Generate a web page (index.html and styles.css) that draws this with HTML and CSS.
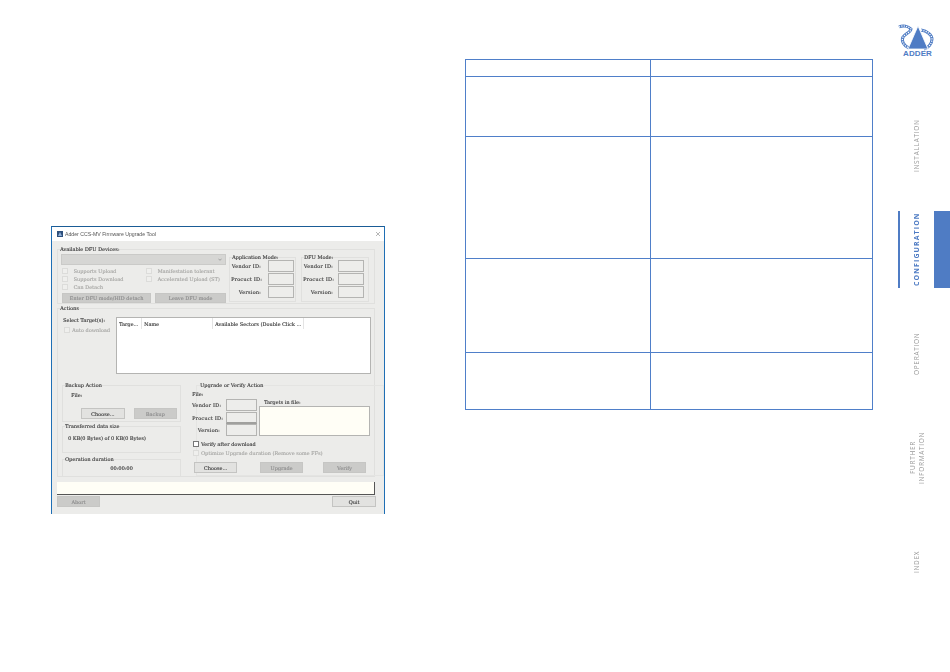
FILE: index.html
```html
<!DOCTYPE html>
<html>
<head>
    <title>Adder CCS-MV Configuration</title>
    <link rel="stylesheet" href="styles.css">
</head>
<body>
    <div class="page">
        <div class="left">
            <div class="window">
                <div class="titlebar">
                    <svg class="app-icon" viewBox="0 0 6 6"><rect width="6" height="6" fill="#2d4f7c"/><path d="M3 1 L5 5 H1 Z" fill="#8fb0d8"/></svg>
                    <span class="title">Adder CCS-MV Firmware Upgrade Tool</span>
                    <svg class="close" viewBox="0 0 5 5"><path d="M0 0 L5 5 M5 0 L0 5" stroke="#666" stroke-width=".6"/></svg>
                </div>
                <div class="dialog">
                    <fieldset class="group devices">
                        <legend>Available DFU Devices:</legend>
                        <div class="devices-row">
                            <div class="devices-left">
                                <div class="combo">
                                    <svg class="chevron" viewBox="0 0 5 3"><path d="M.5 .5 L2.5 2.5 L4.5 .5" fill="none" stroke="#777" stroke-width=".7"/></svg>
                                </div>
                                <div class="checks">
                                    <label class="check off"><i></i>Supports Upload</label>
                                    <label class="check off"><i></i>Manifestation tolerant</label>
                                    <label class="check off"><i></i>Supports Download</label>
                                    <label class="check off"><i></i>Accelerated Upload (ST)</label>
                                    <label class="check off"><i></i>Can Detach</label>
                                </div>
                                <div class="device-buttons">
                                    <button class="btn off enter">Enter DFU mode/HID detach</button>
                                    <button class="btn off leave">Leave DFU mode</button>
                                </div>
                            </div>
                            <fieldset class="group mode app-mode">
                                <legend>Application Mode:</legend>
                                <div class="id-grid">
                                    <span>Vendor ID:</span><span class="field"></span>
                                    <span>Procuct ID:</span><span class="field"></span>
                                    <span>Version:</span><span class="field"></span>
                                </div>
                            </fieldset>
                            <fieldset class="group mode dfu-mode">
                                <legend>DFU Mode:</legend>
                                <div class="id-grid">
                                    <span>Vendor ID:</span><span class="field"></span>
                                    <span>Procuct ID:</span><span class="field"></span>
                                    <span>Version:</span><span class="field"></span>
                                </div>
                            </fieldset>
                        </div>
                    </fieldset>

                    <fieldset class="group actions">
                        <legend>Actions</legend>
                        <div class="targets-row">
                            <div class="targets-left">
                                <div>Select Target(s):</div>
                                <label class="check off auto"><i></i>Auto download</label>
                            </div>
                            <div class="list">
                                <div class="list-head">
                                    <span class="col-target">Targe...</span>
                                    <span class="col-name">Name</span>
                                    <span class="col-sectors">Available Sectors (Double Click ...</span>
                                </div>
                            </div>
                        </div>
                        <div class="lower-row">
                            <div class="lower-left">
                                <fieldset class="group backup">
                                    <legend>Backup Action</legend>
                                    <div class="file-label">File:</div>
                                    <div class="backup-buttons">
                                        <button class="btn">Choose...</button>
                                        <button class="btn off">Backup</button>
                                    </div>
                                </fieldset>
                                <fieldset class="group transferred">
                                    <legend>Transferred data size</legend>
                                    <div class="size-text">0 KB(0 Bytes) of 0 KB(0 Bytes)</div>
                                </fieldset>
                                <fieldset class="group duration">
                                    <legend>Operation duration</legend>
                                    <div class="time">00:00:00</div>
                                </fieldset>
                            </div>
                            <fieldset class="group upgrade">
                                <legend>Upgrade or Verify Action</legend>
                                <div class="upgrade-inner">
                                    <div class="upgrade-file">File:</div>
                                    <div class="upgrade-ids">
                                        <div class="id-grid wide">
                                            <span>Vendor ID:</span><span class="field"></span>
                                            <span>Procuct ID:</span><span class="field"></span>
                                            <span>Version:</span><span class="field"></span>
                                        </div>
                                        <div class="targets-file">
                                            <div class="targets-label">Targets in file:</div>
                                            <div class="targets-box"></div>
                                        </div>
                                    </div>
                                    <label class="check verify"><i></i>Verify after download</label>
                                    <label class="check off optimize"><i></i>Optimize Upgrade duration (Remove some FFs)</label>
                                    <div class="upgrade-buttons">
                                        <button class="btn">Choose...</button>
                                        <button class="btn off">Upgrade</button>
                                        <button class="btn off">Verify</button>
                                    </div>
                                </div>
                            </fieldset>
                        </div>
                    </fieldset>

                    <div class="status"></div>
                    <div class="footer">
                        <button class="btn off">Abort</button>
                        <button class="btn">Quit</button>
                    </div>
                </div>
            </div>
        </div>

        <table class="info-table">
            <colgroup><col class="col-a"><col></colgroup>
            <tr class="row-head"><td></td><td></td></tr>
            <tr class="row-1"><td></td><td></td></tr>
            <tr class="row-2"><td></td><td></td></tr>
            <tr class="row-3"><td></td><td></td></tr>
            <tr class="row-4"><td></td><td></td></tr>
        </table>

        <div class="sidebar">
            <div class="logo">
                <svg class="logo-mark" viewBox="0 0 36 25">
                    <path d="M2 2 C6 0 11 1 14 4 C14 7 8 9 6 12 C4 16 7 21 12 23 M24 5 C30 6 35 10 35 14 C35 19 31 23 27 24" fill="none" stroke="#4f7cc4" stroke-width="3"/>
                    <path d="M2 2 C6 0 11 1 14 4 C14 7 8 9 6 12 C4 16 7 21 12 23 M24 5 C30 6 35 10 35 14 C35 19 31 23 27 24" fill="none" stroke="white" stroke-width="1.3" stroke-dasharray="1.2 1.2"/>
                    <path d="M21 1 L31 24 H11 Z" fill="#4f7cc4" stroke="white" stroke-width=".8"/>
                </svg>
                <div class="logo-text">ADDER</div>
            </div>
            <div class="nav">
                <div class="nav-item"><span class="nav-label">INSTALLATION</span></div>
                <div class="nav-item active"><span class="nav-label">CONFIGURATION</span></div>
                <div class="nav-item"><span class="nav-label">OPERATION</span></div>
                <div class="nav-item"><span class="nav-label">FURTHER<br>INFORMATION</span></div>
                <div class="nav-item"><span class="nav-label">INDEX</span></div>
            </div>
        </div>
    </div>
</body>
</html>
```

FILE: styles.css
```css
* {
    box-sizing: border-box;
}
body {
    margin: 0;
    background: white;
    overflow: hidden;
}
.page {
    display: flex;
    align-items: flex-start;
    width: 950px;
    height: 672px;
}
.left {
    width: 465px;
    padding: 226px 0 0 51px;
}

/* firmware tool window */
.window {
    width: 334px;
    height: 288px;
    border: 1px solid #1f6fb5;
    border-top-color: #1a5c96;
    border-bottom: none;
    background: #ececea;
    font-family: "DejaVu Serif", serif;
    font-size: 5px;
    line-height: 6px;
    color: #555;
    text-shadow: 0.15px 0 currentColor;
    filter: blur(0.4px);
}
.titlebar {
    display: flex;
    align-items: center;
    height: 14px;
    padding: 0 4px 0 5px;
    background: white;
}
.app-icon {
    width: 6px;
    height: 6px;
}
.title {
    margin-left: 2px;
    font-family: "Liberation Sans", sans-serif;
    font-size: 5.2px;
    color: #555;
    text-shadow: none;
    flex: 1;
}
.close {
    width: 4px;
    height: 4px;
}
.dialog {
    padding: 5px 9px 0 5px;
}
.group {
    margin: 0;
    padding: 0;
    min-width: 0;
    border: 1px solid #e0e0de;
}
.group legend {
    padding: 0;
    margin-left: 2px;
    height: 6px;
    background: #ececea;
    white-space: nowrap;
}
.btn {
    height: 11px;
    padding: 0;
    font-family: "DejaVu Serif", serif;
    font-size: 5px;
    line-height: 6px;
    color: #555;
    text-shadow: 0.15px 0 currentColor;
    background: #e2e2e0;
    border: 1px solid #c4c4c2;
    border-radius: 0;
}
.btn.off {
    color: #959595;
    background: #cbcbc9;
    border-color: #c6c6c4;
}
.check {
    display: flex;
    align-items: center;
    height: 6px;
    white-space: nowrap;
}
.check i {
    width: 6px;
    height: 6px;
    flex: none;
    background: white;
    border: 1px solid #777;
}
.check.off {
    color: #b0b0ae;
}
.check.off i {
    background: #efefed;
    border-color: #dcdcda;
}
.field {
    display: block;
    height: 12px;
    background: #ededeb;
    border: 1px solid #b4b4b2;
}

/* available devices */
.devices {
    height: 58px;
}
.devices-row {
    display: flex;
    padding: 2px 0 0 3px;
}
.devices-left {
    width: 165px;
    flex: none;
}
.combo {
    display: flex;
    align-items: center;
    justify-content: flex-end;
    height: 11px;
    padding-right: 3px;
    background: #d6d6d4;
    border: 1px solid #cacac8;
}
.chevron {
    width: 4px;
    height: 3px;
}
.checks {
    display: grid;
    grid-template-columns: 84px 1fr;
    grid-auto-rows: 8.2px;
    margin: 3px 0 0 1px;
}
.checks .check i {
    margin-right: 5.5px;
}
.device-buttons {
    display: flex;
    margin: 0 0 0 1px;
}
.device-buttons .btn {
    height: 10px;
}
.enter {
    width: 89px;
    margin-right: 4px;
}
.leave {
    width: 71px;
}
.mode {
    height: 48px;
    margin-left: 3px;
    flex: none;
}
.app-mode {
    width: 67px;
}
.dfu-mode {
    width: 68px;
    margin-left: 5px;
}
.id-grid {
    display: grid;
    grid-template-columns: 30px 26px;
    column-gap: 7px;
    row-gap: 1px;
    align-items: center;
    padding: 0 0 0 1px;
    text-align: right;
    letter-spacing: 0.2px;
    white-space: nowrap;
}
.dfu-mode .id-grid {
    column-gap: 5px;
}

/* actions */
.actions {
    height: 172px;
    margin-top: 1px;
}
.targets-row {
    display: flex;
    padding: 6px 0 0 5px;
}
.targets-left {
    width: 53px;
    flex: none;
    white-space: nowrap;
}
.auto {
    margin: 4px 0 0 1px;
}
.auto i {
    margin-right: 2px;
}
.list {
    width: 255px;
    height: 57px;
    flex: none;
    background: white;
    border: 1px solid #b4b4b2;
}
.list-head {
    display: flex;
    height: 11px;
    align-items: center;
    white-space: nowrap;
}
.list-head span {
    height: 100%;
    padding: 3px 0 0 2px;
    border-right: 1px solid #e4e4e4;
    overflow: hidden;
}
.col-target {
    width: 25px;
}
.col-name {
    width: 71px;
}
.col-sectors {
    width: 91px;
}
.lower-row {
    display: flex;
    margin-top: 8px;
    padding-left: 4px;
}
.lower-left {
    width: 119px;
    flex: none;
}
.backup {
    height: 40px;
}
.file-label {
    margin: 4px 0 0 8px;
}
.backup-buttons {
    display: flex;
    gap: 9px;
    margin: 10px 0 0 18px;
}
.backup-buttons .btn {
    width: 43.5px;
    flex: none;
}
.transferred {
    height: 30px;
    margin-top: 1px;
}
.size-text {
    margin: 6px 0 0 5px;
    white-space: nowrap;
}
.duration {
    height: 21px;
    margin-top: 3px;
}
.time {
    margin-top: 3px;
    text-align: center;
}
.upgrade {
    width: 188px;
    height: 94px;
    flex: none;
    margin-left: 15px;
    border-color: #e4e4e2;
}
.upgrade legend {
    margin-left: 3px;
}
.upgrade-inner {
    margin-left: -5px;
}
.upgrade-file {
    margin-top: 3px;
}
.upgrade-ids {
    display: flex;
    margin-top: 2px;
}
.id-grid.wide {
    grid-template-columns: 28px 31px;
    column-gap: 6px;
    row-gap: 0.5px;
    padding: 0;
}
.id-grid.wide .field:nth-child(4) {
    border-bottom: 2px solid #a0a09e;
}
.targets-file {
    margin-left: 2px;
}
.targets-label {
    margin-bottom: 1px;
    padding-left: 5px;
}
.targets-box {
    width: 111px;
    height: 30px;
    background: #fffef6;
    border: 1px solid #b4b4b2;
}
.verify {
    margin: 5px 0 0 1px;
}
.verify i,
.optimize i {
    margin-right: 2px;
}
.optimize {
    margin: 3px 0 0 1px;
}
.upgrade-buttons {
    display: flex;
    margin: 6px 0 0 2px;
}
.upgrade-buttons .btn {
    width: 43px;
    flex: none;
    margin-right: 20px;
}
.upgrade-buttons .btn:first-child {
    margin-right: 23px;
}
.status {
    height: 13px;
    margin-top: 5px;
    background: #fffef6;
    border-right: 1px solid #555;
    border-bottom: 1px solid #555;
}
.footer {
    display: flex;
    justify-content: space-between;
    width: 319px;
    margin-top: 1px;
}
.footer .btn {
    width: 43px;
}
.footer .btn:last-child {
    width: 44px;
}

/* table */
.info-table {
    width: 408px;
    margin-top: 59px;
    border-collapse: collapse;
    table-layout: fixed;
}
.info-table td {
    padding: 0;
    border: 1px solid #4f7fc9;
}
.col-a {
    width: 185px;
}
.row-head {
    height: 17px;
}
.row-1 {
    height: 60px;
}
.row-2 {
    height: 122px;
}
.row-3 {
    height: 94px;
}
.row-4 {
    height: 57px;
}

/* right hand navigation */
.sidebar {
    width: 77px;
    padding-top: 25px;
}
.logo {
    width: 36px;
    height: 82px;
    margin-left: 24px;
}
.logo-mark {
    display: block;
    width: 36px;
    height: 25px;
    overflow: visible;
}
.logo-text {
    margin: 0 0 0 6px;
    font-family: "Liberation Sans", sans-serif;
    font-size: 8px;
    font-weight: bold;
    line-height: 7px;
    color: #4f7cc4;
    letter-spacing: 0.1px;
}
.nav {
    display: flex;
    flex-direction: column;
    gap: 27px;
    margin-left: 25px;
}
.nav-item {
    display: flex;
    width: 52px;
    height: 77px;
    border-left: 2px solid transparent;
}
.nav-label {
    width: 33px;
    display: flex;
    align-items: center;
    justify-content: center;
    writing-mode: vertical-rl;
    transform: rotate(180deg);
    font-family: "Open Sans", sans-serif;
    font-size: 6.5px;
    line-height: 9px;
    letter-spacing: 0.7px;
    color: #999;
    text-align: center;
}
.nav-item.active {
    border-left-color: #4f7cc4;
    background: linear-gradient(to left, #4f7cc4 16px, transparent 16px);
}
.nav-item.active .nav-label {
    color: #4f7cc4;
    font-weight: bold;
    font-size: 7px;
    letter-spacing: 1.1px;
}
```
